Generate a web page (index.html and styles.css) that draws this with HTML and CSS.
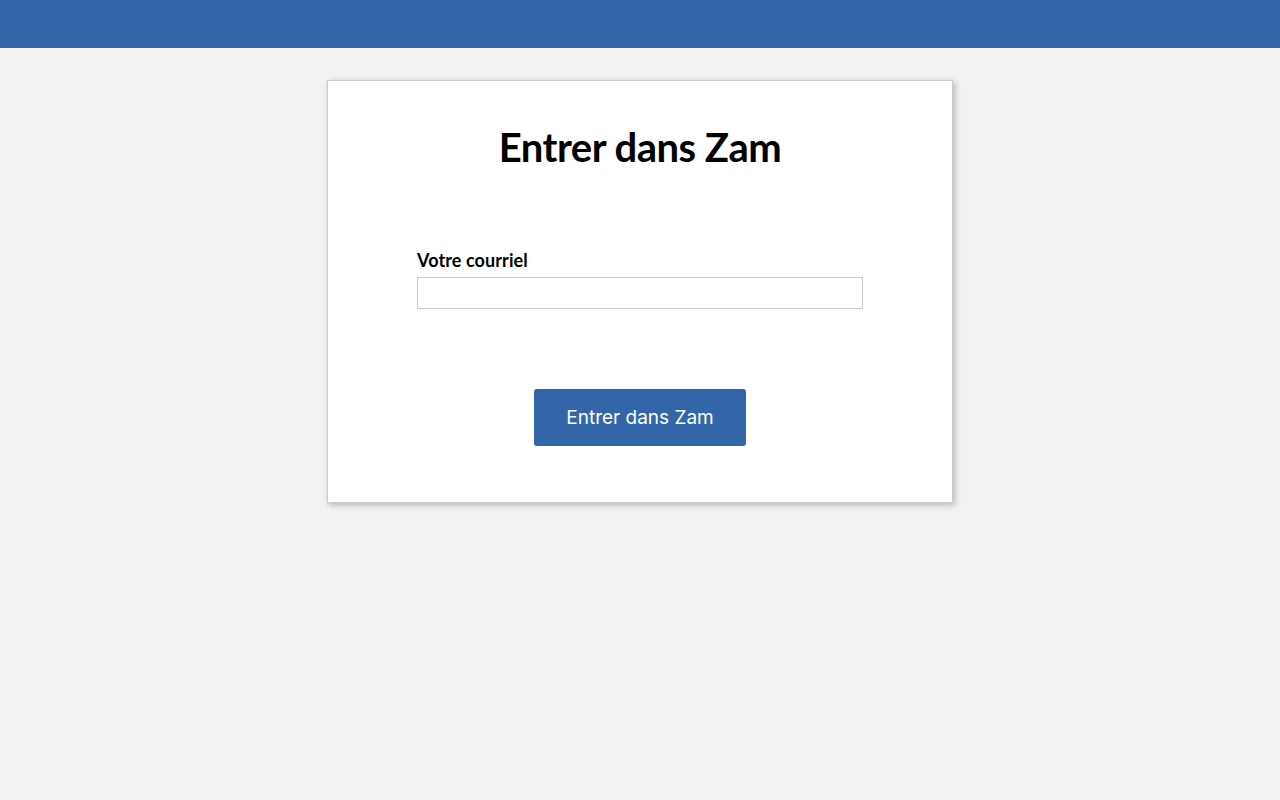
FILE: index.html
```html
<!DOCTYPE html>
<html lang="fr">
<head>
<meta charset="utf-8">
<title>Entrer dans Zam</title>
<link rel="stylesheet" href="styles.css">
</head>
<body>
<header class="topbar"></header>
<main class="page">
  <section class="card">
    <h1 class="title">Entrer dans Zam</h1>
    <form class="form">
      <label class="label" for="email">Votre courriel</label>
      <input class="input" id="email" type="email">
      <div class="actions">
        <button class="button" type="button">Entrer dans Zam</button>
      </div>
    </form>
  </section>
</main>
</body>
</html>
```
FILE: styles.css
```css
html, body {
  margin: 0;
  padding: 0;
}
body {
  background: #f2f2f2;
  font-family: "Lato", "Noto Sans", sans-serif;
  color: #000;
  min-height: 800px;
}
.topbar {
  height: 48px;
  background: #3366a8;
}
.page {
  display: flex;
  justify-content: center;
  padding-top: 32px;
}
.card {
  width: 624px;
  background: #fff;
  border: 1px solid #cccccc;
  box-shadow: 2px 2px 6px rgba(0, 0, 0, 0.25);
  padding: 40px 0 56px;
  display: flex;
  flex-direction: column;
  align-items: center;
}
.title {
  margin: 0;
  font-size: 40px;
  font-weight: 700;
  line-height: 52px;
  letter-spacing: -0.5px;
}
.form {
  width: 446px;
  margin-top: 76px;
  display: flex;
  flex-direction: column;
}
.label {
  font-size: 18px;
  font-weight: 700;
  line-height: 22px;
  letter-spacing: 0.1px;
  margin-bottom: 6px;
}
.input {
  box-sizing: border-box;
  width: 446px;
  height: 32px;
  border: 1px solid #cccccc;
  margin: 0;
  padding: 0 8px;
  font-size: 16px;
}
.actions {
  display: flex;
  justify-content: center;
  margin-top: 80px;
}
.button {
  width: 212px;
  height: 57px;
  background: #3366a8;
  color: #fff;
  border: none;
  border-radius: 3px;
  font-family: "Inter", "Roboto", sans-serif;
  font-size: 19px;
  font-weight: 400;
  cursor: pointer;
}
```
